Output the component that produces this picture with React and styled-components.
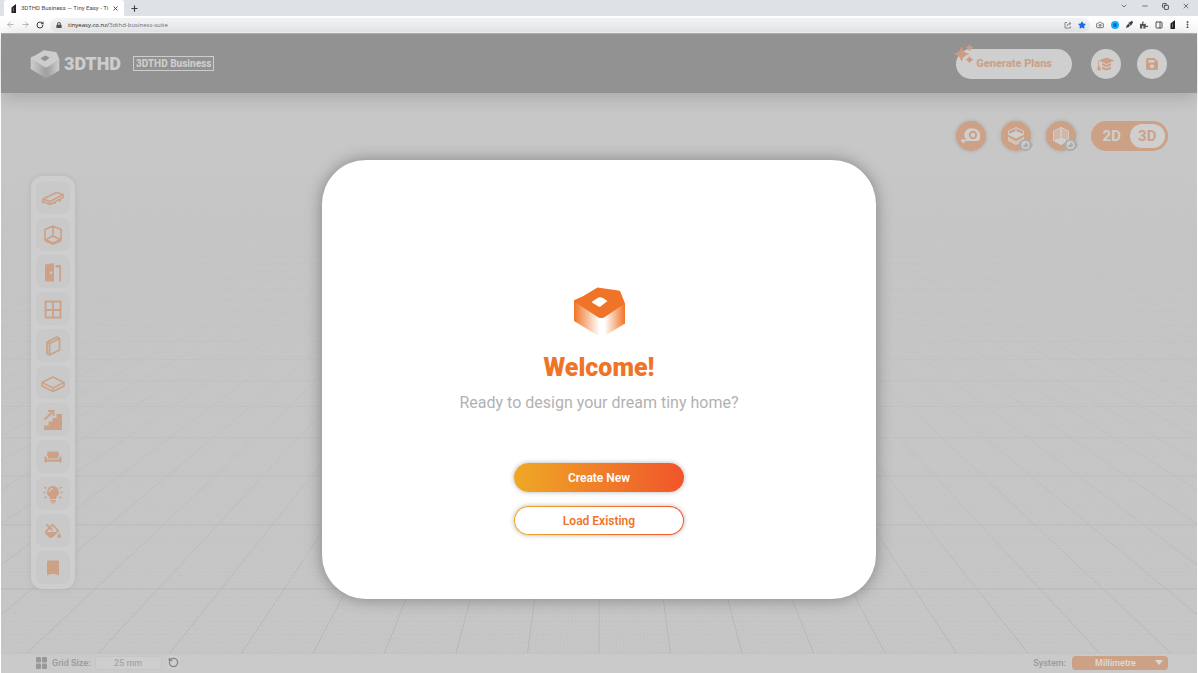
import styled, { createGlobalStyle, css } from "styled-components"
import { FaFillDrip, FaStar, FaPuzzlePiece, FaEyeDropper, FaLock } from "react-icons/fa"
import { ArrowLeft, ArrowRight, RotateCw, RotateCcw, X, Plus, Minus, ChevronDown, Copy, Camera, PanelRight, EllipsisVertical } from "lucide-react"

const ORANGE = "#cca186"
const LIGHT = "#cfcfcf"

const GlobalStyle = createGlobalStyle`
*{box-sizing:border-box;}
body{margin:0;background:#fff;font-family:Roboto,"Liberation Sans",sans-serif;}
button,input,select{font-family:inherit;margin:0;padding:0;border:0;}
button{cursor:pointer;}
svg{display:block;flex-shrink:0;}
`

/* ---------- perspective floor ---------- */
const VX = 598
const VY = 22
const FLOOR_BOTTOM = 560

function rayPath(step, count) {
    let d = ""
    const t = 60 / (FLOOR_BOTTOM - VY)
    for (let i = -count; i <= count; i++) {
        d += `M${(VX + i * step * t).toFixed(1)} ${VY + 60}L${(VX + i * step).toFixed(1)} ${FLOOR_BOTTOM}`
    }
    return d
}
function rowPath(count, step, offset) {
    let d = ""
    for (let i = 0; i < count; i++) {
        const y = VY + 1 / (0.00186 + (i * step) + offset)
        if (y < 70) break
        d += `M0 ${y.toFixed(1)}H1196`
    }
    return d
}
function Floor() {
    return (
        <FloorSvg viewBox="0 0 1196 560" preserveAspectRatio="xMidYMax slice" aria-hidden="true">
            <defs>
                <linearGradient id="fade" x1="0" y1="0" x2="0" y2="1">
                    <stop offset="0.12" stopColor="#fff" stopOpacity="0" />
                    <stop offset="0.6" stopColor="#fff" stopOpacity="0.4" />
                    <stop offset="1" stopColor="#fff" />
                </linearGradient>
                <mask id="floorMask"><rect width="1196" height="560" fill="url(#fade)" /></mask>
            </defs>
            <g mask="url(#floorMask)" fill="none">
                <path d={rayPath(3.575, 1300)} stroke="#b4b4b4" strokeOpacity="0.2" strokeWidth="0.7" />
                <path d={rowPath(560, 0.0000165, 0)} stroke="#b4b4b4" strokeOpacity="0.18" strokeWidth="0.7" />
                <path d={rayPath(71.5, 70)} stroke="#b2b2b2" strokeWidth="0.8" />
                <path d={rowPath(28, 0.00033, 0.00025)} stroke="#b2b2b2" strokeWidth="0.8" />
            </g>
        </FloorSvg>
    )
}

/* ---------- drawings ---------- */
function Cube({ width, height, top, side, hole, id }) {
    return (
        <svg width={width} height={height} viewBox="0 0 52 50" aria-hidden="true">
            <defs>
                <linearGradient id={id}>
                    <stop offset="0" stopColor={top} />
                    <stop offset="0.5" stopColor={side} />
                    <stop offset="0.6" stopColor={side} />
                    <stop offset="1" stopColor={top} />
                </linearGradient>
            </defs>
            <path d="M0.5 13L28 30L51.5 16V36.5L31 49Q28 50.5 25 49L0.5 34Z" fill={`url(#${id})`} />
            <path d="M24 0.5L45 3.500Q46.500 3.800 47 5L51.500 16.500L30.500 30.500Q28 31.500 25 30.500L0.500 14.500Q0.500 13.200 2 12.500L9 9.500Z" fill={top} />
            <path d="M25 10.500Q27 9.800 29 10.800L34 14L27 19.500Q26 20 25 19.500L18.500 15.500Q18.300 14.500 19.500 14Z" fill={hole} />
        </svg>
    )
}
const Icon = ({ children, size = 24, weight = 1.6 }) => (
    <svg width={size} height={size} viewBox="0 0 24 24" fill="none" stroke="currentColor" strokeWidth={weight} strokeLinejoin="round">{children}</svg>
)
const Slab = () => (
    <Icon>
        <path d="M2 13L15.500 6.500L22 8.500L9 15.500ZM2 13V15.500L9 18.500L22 11.500V8.500M9 15.500V18.500M2 15.500L0.800 17M14 16V18M19 13.500V16" />
    </Icon>
)
const Room = () => (
    <Icon>
        <path d="M4 6.500L12 3L20 6.500V17L12 20.500L4 17ZM12 3V13L4 17M12 13L20 17" />
        <path d="M4.500 17.500L12 20.500L19.500 17.500" strokeWidth="2.500" />
    </Icon>
)
const Door = () => (
    <svg width="24" height="24" viewBox="0 0 24 24" fill="currentColor">
        <path fillRule="evenodd" d="M4 4.500L13 3V21.500H4ZM10 11.500A1.200 1.200 0 1 0 10 13.900A1.200 1.200 0 1 0 10 11.500Z" />
        <path d="M14.500 5H20V21.500H18.300V7.500H14.500Z" />
    </svg>
)
const WindowIcon = () => (
    <Icon weight={1.8}><path d="M4.500 4.500H19.500V20.500H4.500ZM12 4.500V20.500M4.500 13H19.500M4 20.500H20" /></Icon>
)
const Wall = () => (
    <Icon weight={1.7}><path d="M6 8L16 3L18.500 4.500V16L8.500 21L6 19.500ZM6 8L8.500 9.500V21M8.500 9.500L18.500 4.500" /></Icon>
)
const Roof = () => (
    <Icon><path d="M1 11.500L12 6L23 11.500L12 17ZM1 11.500V15L12 20.500L23 15V11.500M12 17V20.500" /></Icon>
)
const Stairs = () => (
    <svg width="24" height="24" viewBox="0 0 24 24" fill="currentColor">
        <path d="M3 22V17.500H7.500V13.500H11.500V10H15.500V6H21V22Z" />
        <path d="M3.500 11.500L12 3.500M7 3H12.500V8" fill="none" stroke="currentColor" strokeWidth="1.800" />
    </svg>
)
const Sofa = () => (
    <svg width="24" height="24" viewBox="0 0 24 24" fill="currentColor">
        <path d="M6 9Q6 6.500 8.500 6.500H15.500Q18 6.500 18 9V10.500Q17 11 17 12.500V13.500H7V12.500Q7 11 6 10.500Z" />
        <path d="M3.500 11.500Q6 11 6 13V14.500H18V13Q18 11 20.500 11.500V17.500H18.500V16.800H5.500V17.500H3.500Z" />
    </svg>
)
const Bulb = () => (
    <svg width="24" height="24" viewBox="0 0 24 24" fill="currentColor">
        <path fillRule="evenodd" d="M12 4A6 6 0 0 1 15.500 14.800L15 17H9L8.500 14.800A6 6 0 0 1 12 4ZM12 6V7.200A2.800 2.800 0 0 0 9.200 10H8A4 4 0 0 1 12 6Z" />
        <path d="M9 18H15V19.500H9ZM10 20.200H14V21.200H10Z" />
        <path d="M2.500 10.500H4.500M19.500 10.500H21.500M3.500 5L5.500 6.500M20.500 5L18.500 6.500M3.500 16L5.500 14.800M20.500 16L18.500 14.800" stroke="currentColor" strokeWidth="1.500" />
    </svg>
)
const Ribbon = () => (
    <svg width="24" height="24" viewBox="0 0 24 24" fill="currentColor">
        <path d="M6 5.500Q6 4.500 7 4.500H17Q18 4.500 18 5.500V19.500Q12 16 6 19.500Z" />
    </svg>
)
const Cap = () => (
    <svg width="18" height="16" viewBox="0 0 18 16" fill="currentColor">
        <path d="M1.500 4.500L9.500 1.500L17.500 4.500L9.500 8Z" />
        <path d="M5 7L9.500 9L14 7V9.500L9.500 11L5 9.500ZM5 10.800L9.500 12.200L14 10.800V13Q9.500 15.500 5 13Z" />
        <path d="M1.500 5V11M1.500 10L0.500 14H3.500L2.500 10" stroke="currentColor" strokeWidth="0.800" />
    </svg>
)
const Disk = () => (
    <svg width="14" height="14" viewBox="0 0 14 14" fill="currentColor">
        <path fillRule="evenodd" d="M2.500 1H9.500L13 4.500V11.500Q13 13 11.500 13H2.500Q1 13 1 11.500V2.500Q1 1 2.500 1ZM3.500 3V5.500H9.500V3ZM7 7.300A2 2 0 1 0 7 11.300A2 2 0 1 0 7 7.300Z" />
    </svg>
)
const Tape = () => (
    <svg width="22" height="20" viewBox="0 0 22 20">
        <path fill={LIGHT} d="M13 2.500A7 6.500 0 0 1 20 9V12Q20 15 17 15H4.500V17H2.500V15.500H1V13.500H6.500A7 6.500 0 0 1 13 2.500Z" />
        <circle cx="13" cy="9" r="3.200" fill={LIGHT} stroke={ORANGE} strokeWidth="2" />
    </svg>
)
const RoofView = () => (
    <svg width="20" height="20" viewBox="0 0 20 20">
        <path d="M2.500 11V14.500L10 18.500L17.500 14.500V11L10 15Z" fill="#d8c0b0" />
        <path d="M2.500 8V5L10 1.500L17.500 5V8M10 1.500V5M2.500 11V14.500L10 18.500L17.500 14.500V11" fill="none" stroke={LIGHT} />
        <path d="M1.500 8.500L10 5L18.500 8.500L10 12.500Z" fill={LIGHT} />
    </svg>
)
const WallView = () => (
    <svg width="20" height="20" viewBox="0 0 20 20">
        <path d="M2.500 5L10 1.500L17.500 5V14.500L10 18.500L2.500 14.500Z" fill="#d3b7a4" stroke={LIGHT} />
        <path d="M2.500 14.500L10 11.500L17.500 14.500L10 18.500Z" fill={LIGHT} />
        <path d="M10 1.500V11.500" stroke={LIGHT} strokeWidth="1.500" />
    </svg>
)
const Eye = () => (
    <svg width="15" height="12" viewBox="0 0 15 12">
        <path d="M0 6Q3 0 7.500 0T15 6Q12 12 7.500 12T0 6Z" fill="#acacac" />
        <circle cx="7.500" cy="6" r="4" fill={LIGHT} />
        <path d="M7.500 3.500A2.500 2.500 0 1 1 5 6Q7.500 6.500 7.500 3.500Z" fill="#acacac" />
    </svg>
)
const Sparkles = () => (
    <svg width="20" height="20" viewBox="0 0 20 20" fill="#cf9a80">
        <path d="M7.500 3Q8.700 8.700 14.500 10Q8.700 11.300 7.500 17Q6.300 11.300 0.500 10Q6.300 8.700 7.500 3Z" stroke="#cf9a80" strokeWidth="0.800" />
        <path d="M15.500 0Q16.200 3 19.500 3.800Q16.200 4.600 15.500 7.500Q14.800 4.600 11.500 3.800Q14.800 3 15.500 0Z" />
        <path d="M15.500 12Q16.200 15 19.500 15.800Q16.200 16.600 15.500 19.500Q14.800 16.600 11.500 15.800Q14.800 15 15.500 12Z" />
    </svg>
)
const ShareMark = () => (
    <svg width="8" height="8" viewBox="0 0 8 8" fill="none" stroke="#777" strokeWidth="0.800">
        <path d="M3 1.500H1V7H6.500V5.500M3 5Q3 2.500 6.500 2.500M5.200 1L7 2.500L5.200 4" />
    </svg>
)
const Favicon = () => (
    <svg width="6" height="9" viewBox="0 0 6 9"><path d="M0.500 3.500L5 0V9H0.500Z" fill="#222" /><path d="M2.500 3.500V7.500" stroke="#aaa" strokeWidth="0.600" /></svg>
)
const GridMark = () => (
    <svg width="11" height="12" viewBox="0 0 11 12" fill="#989898">
        <rect width="5" height="5.500" rx="1" /><rect x="6" width="5" height="5.500" rx="1" />
        <rect y="6.500" width="5" height="5.500" rx="1" /><rect x="6" y="6.500" width="5" height="5.500" rx="1" />
    </svg>
)

const tools = [
    ["Foundation", <Slab />], ["Room", <Room />], ["Door", <Door />], ["Window", <WindowIcon />],
    ["Wall", <Wall />], ["Roof", <Roof />], ["Stairs", <Stairs />], ["Furniture", <Sofa />],
    ["Lighting", <Bulb />], ["Paint", <FaFillDrip size={16} />], ["Saved", <Ribbon />],
]

export default function App() {
    return (
        <Page>
            <GlobalStyle />
            <TabStrip>
                <Tab>
                    <Favicon />
                    <TabTitle>3DTHD Business — Tiny Easy - Ti</TabTitle>
                    <ChromeButton aria-label="Close tab"><X size={7} strokeWidth={3} /></ChromeButton>
                </Tab>
                <ChromeButton aria-label="New tab"><Plus size={9} strokeWidth={3} /></ChromeButton>
                <WindowControls>
                    <ChromeButton aria-label="Search tabs"><ChevronDown size={8} /></ChromeButton>
                    <ChromeButton aria-label="Minimise"><Minus size={8} /></ChromeButton>
                    <ChromeButton aria-label="Restore"><Copy size={7} strokeWidth={3} /></ChromeButton>
                    <ChromeButton aria-label="Close"><X size={8} /></ChromeButton>
                </WindowControls>
            </TabStrip>
            <AddressRow>
                <ChromeButton aria-label="Back" $dim><ArrowLeft size={9} /></ChromeButton>
                <ChromeButton aria-label="Forward" $dim><ArrowRight size={9} /></ChromeButton>
                <ChromeButton aria-label="Reload"><RotateCw size={8} strokeWidth={3} /></ChromeButton>
                <Address>
                    <FaLock size={6} color="#555" />
                    <Url>tinyeasy.co.nz/<span>3dthd-business-suite</span></Url>
                    <ShareMark />
                    <FaStar size={8} color="#1a73e8" />
                </Address>
                <Extensions>
                    <Camera size={8} color="#777" strokeWidth={3} />
                    <svg width="8" height="8" viewBox="0 0 8 8"><circle cx="4" cy="4" r="4" fill="#19b5fe" /><circle cx="4" cy="4" r="2" fill="#0b6fe0" /></svg>
                    <FaEyeDropper size={7} color="#445" />
                    <FaPuzzlePiece size={8} color="#555" />
                    <PanelRight size={8} color="#555" strokeWidth={3} />
                    <Favicon />
                    <EllipsisVertical size={9} color="#444" strokeWidth={3} />
                </Extensions>
            </AddressRow>
            <Planner>
                <Header>
                    <Cube width={30} height={28} top="#cdcdcd" side="#a2a2a2" hole="#929292" id="logoSide" />
                    <Brand>3DTHD</Brand>
                    <Plan>3DTHD Business</Plan>
                    <HeaderActions>
                        <Generate><Spark><Sparkles /></Spark>Generate Plans</Generate>
                        <Round aria-label="Tutorials"><Cap /></Round>
                        <Round aria-label="Save"><Disk /></Round>
                    </HeaderActions>
                </Header>
                <Workspace>
                    <Floor />
                    <Toolbox aria-label="Tools">
                        {tools.map(([name, icon]) => <Tool key={name} aria-label={name}>{icon}</Tool>)}
                    </Toolbox>
                    <ViewBar>
                        <Round $solid aria-label="Measure"><Tape /></Round>
                        <Round $solid aria-label="Toggle roof"><RoofView /><Badge><Eye /></Badge></Round>
                        <Round $solid aria-label="Toggle walls"><WallView /><Badge><Eye /></Badge></Round>
                        <Switch>
                            <Mode>2D</Mode>
                            <Mode $active>3D</Mode>
                        </Switch>
                    </ViewBar>
                </Workspace>
                <StatusBar>
                    <GridMark />
                    <label htmlFor="grid">Grid Size:</label>
                    <SizeInput id="grid" defaultValue="25 mm" />
                    <Reset aria-label="Reset grid size"><RotateCcw size={11} strokeWidth={3} /></Reset>
                    <SystemLabel htmlFor="system">System:</SystemLabel>
                    <SelectWrap>
                        <select id="system"><option>Millimetre</option></select>
                        <svg width="8" height="5" viewBox="0 0 8 5"><path d="M0 0H8L4 5Z" fill="#dadada" /></svg>
                    </SelectWrap>
                </StatusBar>
                <Overlay>
                    <Dialog role="dialog" aria-labelledby="welcome">
                        <Cube width={53} height={50} top="#f07427" side="#fff" hole="#fff" id="heroSide" />
                        <Title id="welcome">Welcome!</Title>
                        <Lead>Ready to design your dream tiny home?</Lead>
                        <Choices>
                            <Choice $primary>Create New</Choice>
                            <Choice>Load Existing</Choice>
                        </Choices>
                    </Dialog>
                </Overlay>
            </Planner>
        </Page>
    )
}

const Page = styled.div`
display:flex;flex-direction:column;
min-height:100vh;
`
const TabStrip = styled.div`
display:flex;align-items:center;
height:16px;padding-left:4px;
background:#dee1e6;
`
const Tab = styled.div`
display:flex;align-items:center;
height:16px;padding:0 5px 0 7px;gap:4px;
margin-right:6px;
background:#fff;border-radius:3px 3px 0 0;
`
const TabTitle = styled.span`
white-space:nowrap;
font:6px/12px Roboto,sans-serif;color:#45484c;
`
const ChromeButton = styled.button`
display:flex;align-items:center;justify-content:center;
background:none;
color:${p => p.$dim ? "#a5a7aa" : "#3c4043"};
`
const WindowControls = styled.div`
display:flex;gap:13px;
margin-left:auto;padding:0 8px 4px 0;
`
const AddressRow = styled.div`
display:flex;align-items:center;
height:17px;gap:6px;padding:0 6px;
background:#fff;
`
const Address = styled.div`
display:flex;flex:1;align-items:center;
height:14px;gap:6px;padding:0 4px 0 6px;
background:#f1f3f4;border-radius:7px;
`
const Url = styled.span`
flex:1;
font:6px/12px "Open Sans",sans-serif;color:#202124;
span{color:#6a6d71;}
`
const Extensions = styled.div`
display:flex;align-items:center;gap:7px;
`
const Planner = styled.main`
position:relative;
display:flex;flex:1;flex-direction:column;
margin:0 1px;
background:#c7c7c7;
`
const Header = styled.header`
position:relative;z-index:1;
display:flex;align-items:center;
height:60px;padding:0 30px 0 29px;
background:#929292;border-top:1px solid #acacac;
box-shadow:0 2px 20px rgba(0,0,0,.2);
`
const Brand = styled.strong`
margin-left:4px;
font-size:18px;line-height:24px;font-weight:900;color:#cdcdcd;
`
const Plan = styled.span`
margin-left:12px;padding:0 2px;
border:1px solid #cdcdcd;
font-size:10px;line-height:13px;font-weight:800;color:#cdcdcd;
`
const HeaderActions = styled.div`
display:flex;gap:16px;
margin-left:auto;
`
const Round = styled.button`
position:relative;
display:flex;align-items:center;justify-content:center;
width:30px;height:30px;border-radius:50%;
background:${LIGHT};color:${ORANGE};
${p => p.$solid && css`
background:${ORANGE};
box-shadow:0 0 4px rgba(0,0,0,.15);
`}
`
const Generate = styled.button`
position:relative;
height:30px;padding:0 20px;border-radius:15px;
margin-right:3px;
background:${LIGHT};color:${ORANGE};
font-size:11px;font-weight:800;
`
const Spark = styled.span`
position:absolute;left:-2px;top:-5px;
`
const Badge = styled.span`
position:absolute;right:-2px;bottom:0;
`
const Workspace = styled.section`
position:relative;
display:flex;flex:1;align-items:flex-start;justify-content:space-between;
padding:28px 29px 64px 30px;
`
const FloorSvg = styled.svg`
position:absolute;inset:0;
width:100%;height:100%;
`
const Toolbox = styled.nav`
position:relative;
display:flex;flex-direction:column;
gap:4px;padding:5px;margin-top:55px;
background:#cecece;border-radius:12px;
box-shadow:0 0 6px rgba(0,0,0,.08);
`
const Tool = styled.button`
display:flex;align-items:center;justify-content:center;
width:34px;height:33px;border-radius:8px;
background:#c9c9c9;color:${ORANGE};
`
const ViewBar = styled.div`
position:relative;
display:flex;gap:15px;
`
const Switch = styled.div`
display:flex;
height:30px;width:77px;padding:3px;border-radius:15px;
background:${ORANGE};
`
const Mode = styled.button`
flex:1;border-radius:12px;
background:${p => p.$active ? LIGHT : "none"};
color:${p => p.$active ? ORANGE : LIGHT};
font-size:15px;font-weight:700;
`
const StatusBar = styled.footer`
position:relative;
display:flex;align-items:center;
height:20px;padding:0 29px 2px 35px;
background:#cacaca;border-top:1px solid #c3c3c3;
font-size:9px;font-weight:600;color:#9c9c9c;
label{margin-left:5px;}
`
const SizeInput = styled.input`
width:67px;height:14px;margin:0 5px 0 4px;
border:1px solid #c6c6c6;border-radius:3px;
background:#cecece;color:#a6a6a6;
text-align:center;font-size:9px;font-weight:500;
`
const Reset = styled.button`
display:flex;align-items:center;justify-content:center;
width:13px;height:13px;border-radius:3px;
background:#cecece;color:#858585;
`
const SystemLabel = styled.label`
&&{margin-left:auto;}
`
const SelectWrap = styled.div`
display:flex;align-items:center;
width:96px;height:14px;margin-left:6px;padding-right:5px;
background:${ORANGE};border-radius:4px;
select{
flex:1;padding-left:4px;
appearance:none;background:none;
color:#dadada;font-size:9px;font-weight:600;
text-align:center;text-align-last:center;
}
`
const Overlay = styled.div`
position:absolute;inset:0;z-index:2;
display:grid;place-items:center;
padding-top:52px;
`
const Dialog = styled.section`
display:flex;flex-direction:column;align-items:center;
width:554px;max-width:90%;padding:127px 24px 64px;
background:#fff;border-radius:44px;
box-shadow:0 0 16px rgba(0,0,0,.35);
`
const Title = styled.h1`
margin:15px 0 7px;
font-size:25px;line-height:32px;font-weight:900;color:#f07427;
`
const Lead = styled.p`
margin:0 0 48px;
font-size:16px;line-height:24px;color:#b2b2b2;
`
const Choices = styled.div`
display:flex;flex-direction:column;
gap:14px;width:170px;
`
const Choice = styled.button`
height:29px;padding-top:2px;border-radius:15px;
border:1px solid transparent;
font-size:12px;font-weight:600;
box-shadow:0 0 5px rgba(0,0,0,.3);
color:${p => p.$primary ? "#fff" : "#f07427"};
background:${p => p.$primary
        ? "linear-gradient(90deg,#efa826,#f0552a) border-box"
        : "linear-gradient(#fff,#fff) padding-box,linear-gradient(90deg,#efa826,#f0552a) border-box"};
`
